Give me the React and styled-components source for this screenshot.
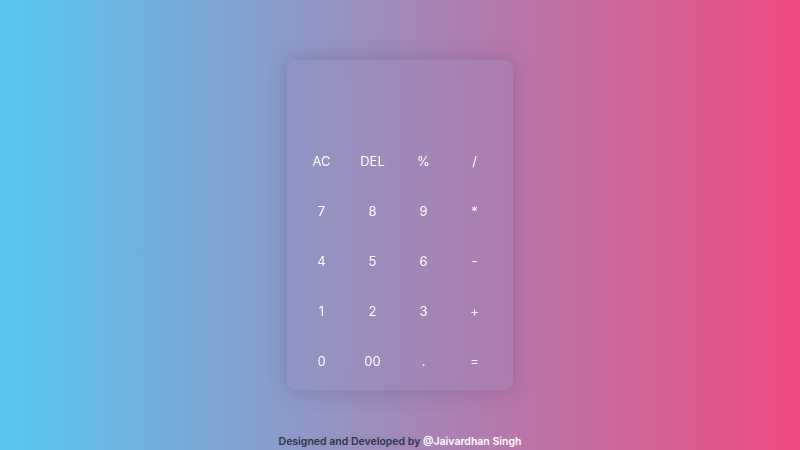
import React, { useState } from 'react'
import styled, { createGlobalStyle } from 'styled-components'

const GlobalStyle = createGlobalStyle`
	* { box-sizing: border-box; margin: 0; padding: 0; }
	body {
		font-family: "Inter", "Open Sans", sans-serif;
		width: 800px;
		height: 450px;
		overflow: hidden;
	}
`

const keys = [
	'AC', 'DEL', '%', '/',
	'7', '8', '9', '*',
	'4', '5', '6', '-',
	'1', '2', '3', '+',
	'0', '00', '.', '=',
]

export default function App() {
	const [value, setValue] = useState('')

	const press = (k) => {
		if (k === 'AC') return setValue('')
		if (k === 'DEL') return setValue(value.slice(0, -1))
		if (k === '=') {
			try {
				// eslint-disable-next-line no-new-func
				setValue(String(Function('return ' + value)()))
			} catch (e) {
				setValue('Error')
			}
			return
		}
		setValue(value + k)
	}

	return (
		<Page>
			<GlobalStyle />
			<Calculator>
				<Display value={value} readOnly />
				<Keys>
					{keys.map((k) => (
						<Key key={k} onClick={() => press(k)}>{k}</Key>
					))}
				</Keys>
			</Calculator>
			<Footer>
				Designed and Developed by <span>@Jaivardhan Singh</span>
			</Footer>
		</Page>
	)
}

const Page = styled.div`
	width: 800px;
	height: 450px;
	background: linear-gradient(90deg, #54c8f3 0%, #ef4a80 100%);
	display: flex;
	flex-direction: column;
	align-items: center;
	padding-top: 60px;
`

const Calculator = styled.div`
	width: 226px;
	height: 330px;
	border-radius: 8px;
	background: rgba(150, 140, 185, 0.26);
	backdrop-filter: blur(8px);
	box-shadow: 0 0 22px rgba(60, 40, 90, 0.24);
	padding: 0 9px;
	display: flex;
	flex-direction: column;
`

const Display = styled.input`
	width: 100%;
	height: 76px;
	background: transparent;
	border: none;
	outline: none;
	color: #fff;
	font-family: "Inter", sans-serif;
	font-size: 26px;
	text-align: right;
	padding: 0 10px;
`

const Keys = styled.div`
	display: grid;
	grid-template-columns: repeat(4, 51px);
	grid-auto-rows: 50px;
`

const Key = styled.button`
	background: transparent;
	border: none;
	outline: none;
	color: #fff;
	font-family: "Inter", "Open Sans", sans-serif;
	font-size: 13px;
	font-weight: 400;
	cursor: pointer;
	display: flex;
	align-items: center;
	justify-content: center;
`

const Footer = styled.p`
	margin-top: 45px;
	font-family: "Inter", sans-serif;
	font-size: 10.5px;
	font-weight: 600;
	color: #2e3548;
	span {
		color: #fff;
	}
`
